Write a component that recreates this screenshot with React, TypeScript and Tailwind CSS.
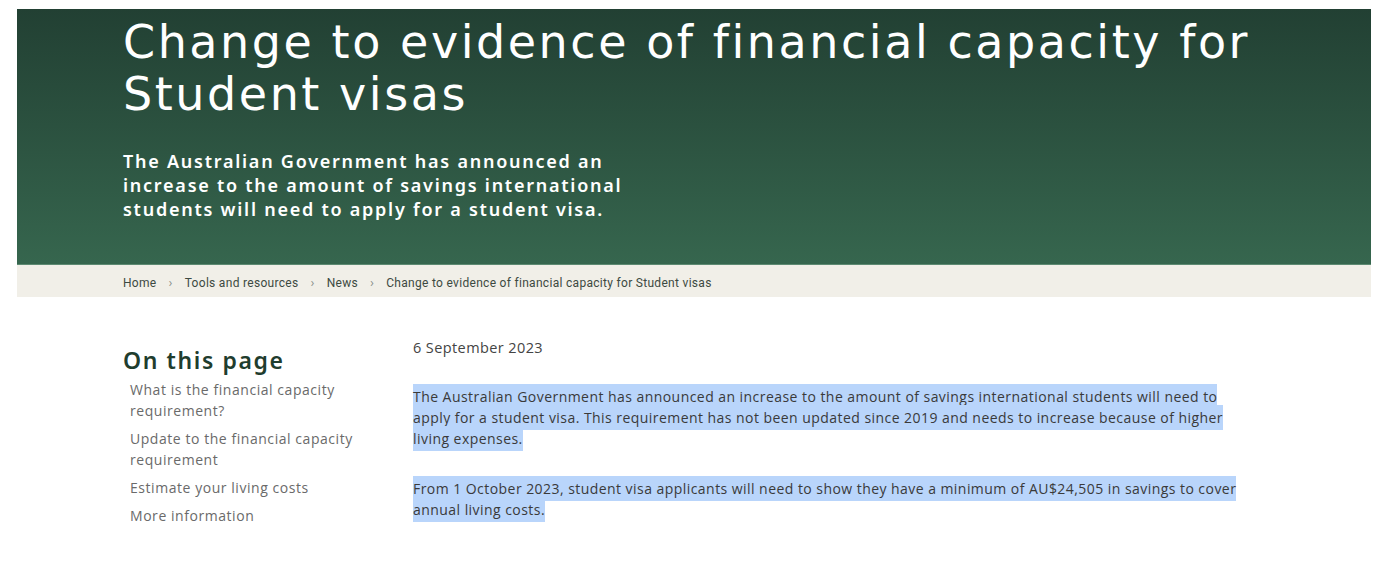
const toc = [
  "What is the financial capacity requirement?",
  "Update to the financial capacity requirement",
  "Estimate your living costs",
  "More information",
];

const crumbs = ["Home", "Tools and resources", "News"];

function Highlight({ children }: { children: React.ReactNode }) {
  return (
    <span className="bg-[#b9d5fb] py-[3px] [box-decoration-break:clone]">
      {children}
    </span>
  );
}

export default function App() {
  return (
    <div className="min-h-[564px] bg-white pt-[9px] font-['Open_Sans',sans-serif]">
      {/* Hero */}
      <div className="ml-[17px] w-[1354px]">
        <div className="h-[255px] bg-gradient-to-b from-[#224033] to-[#36664e] px-[106px] pt-[7px]">
          <h1 className="max-w-[1160px] font-['DejaVu_Sans',sans-serif] text-[46px] font-normal leading-[52px] tracking-[2.55px] text-white">
            Change to evidence of financial capacity for Student visas
          </h1>
          <p className="mt-[29px] w-[515px] font-['Noto_Sans',sans-serif] text-[18px] font-semibold leading-[24px] tracking-[1.75px] text-white">
            The Australian Government has announced an increase to the amount of
            savings international students will need to apply for a student visa.
          </p>
        </div>

        {/* Breadcrumb */}
        <nav className="flex h-[33px] items-center border-t border-[#5d8a72] bg-[#f1efe8] px-[106px] pt-[3px] font-['Roboto',sans-serif] text-[12px] tracking-[0.3px] text-[#3d4a42]">
          {crumbs.map((c) => (
            <span key={c} className="flex items-center">
              {c}
              <span className="mx-[12px] text-[13px] text-[#8a8f8a]">›</span>
            </span>
          ))}
          <span>Change to evidence of financial capacity for Student visas</span>
        </nav>
      </div>

      {/* Body */}
      <div className="ml-[123px] mt-[40px] flex">
        <aside className="w-[290px] pt-[8px]">
          <h2 className="font-['Noto_Sans',sans-serif] text-[23px] font-semibold leading-[30px] tracking-[1.6px] text-[#1f3d2e]">
            On this page
          </h2>
          <ul className="mt-[4px] flex w-[250px] flex-col gap-[7px] pl-[7px] text-[14px] leading-[21px] tracking-[0.55px] text-[#6a6a6a]">
            {toc.map((t) => (
              <li key={t}>{t}</li>
            ))}
          </ul>
        </aside>

        <main className="w-[830px] text-[14px] leading-[21px] tracking-[0.45px] text-[#3a3a3a]">
          <p className="text-[14.5px] tracking-[0.4px] text-[#444]">6 September 2023</p>
          <p className="mt-[28px]">
            <Highlight>
              The Australian Government has announced an increase to the amount
              of savings international students will need to apply for a student
              visa. This requirement has not been updated since 2019 and needs to
              increase because of higher living expenses.
            </Highlight>
          </p>
          <p className="mt-[29px]">
            <Highlight>
              From 1 October 2023, student visa applicants will need to show they
              have a minimum of AU$24,505 in savings to cover annual living costs.
            </Highlight>
          </p>
        </main>
      </div>
    </div>
  );
}
